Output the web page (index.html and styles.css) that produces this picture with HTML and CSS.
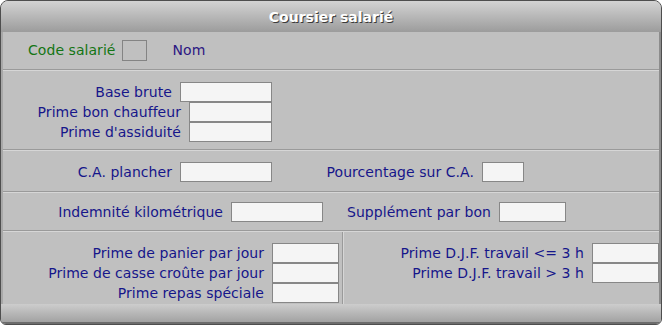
FILE: index.html
```html
<!DOCTYPE html>
<html lang="fr">
<head>
    <meta charset="UTF-8">
    <title>Coursier salarié</title>
    <link rel="stylesheet" href="styles.css">
</head>
<body>
    <div class="window">
        <div class="title-bar">Coursier salarié</div>

        <div class="window-body">
            <div class="section section-head">
                <span class="label label-code">Code salarié</span>
                <span class="code-box"></span>
                <span class="label label-nom">Nom</span>
            </div>
            <div class="separator"></div>

            <div class="section section-base">
                <div class="group group-base">
                    <div class="field"><span class="label">Base brute</span><input class="box w-92" type="text"></div>
                    <div class="field"><span class="label">Prime bon chauffeur</span><input class="box w-83" type="text"></div>
                    <div class="field"><span class="label">Prime d'assiduité</span><input class="box w-83" type="text"></div>
                </div>
            </div>
            <div class="separator"></div>

            <div class="section section-ca">
                <div class="group group-ca1">
                    <div class="field"><span class="label">C.A. plancher</span><input class="box w-92" type="text"></div>
                </div>
                <div class="group group-ca2">
                    <div class="field"><span class="label">Pourcentage sur C.A.</span><input class="box w-42" type="text"></div>
                </div>
            </div>
            <div class="separator"></div>

            <div class="section section-km">
                <div class="group group-km1">
                    <div class="field"><span class="label">Indemnité kilométrique</span><input class="box w-92" type="text"></div>
                </div>
                <div class="group group-km2">
                    <div class="field"><span class="label">Supplément par bon</span><input class="box w-67" type="text"></div>
                </div>
            </div>
            <div class="separator"></div>

            <div class="section section-primes">
                <div class="column column-left">
                    <div class="field"><span class="label">Prime de panier par jour</span><input class="box w-67" type="text"></div>
                    <div class="field"><span class="label">Prime de casse croûte par jour</span><input class="box w-67" type="text"></div>
                    <div class="field"><span class="label">Prime repas spéciale</span><input class="box w-67" type="text"></div>
                </div>
                <div class="vseparator"></div>
                <div class="column column-right">
                    <div class="field"><span class="label">Prime D.J.F. travail &lt;= 3 h</span><input class="box w-67" type="text"></div>
                    <div class="field"><span class="label">Prime D.J.F. travail &gt; 3 h</span><input class="box w-67" type="text"></div>
                </div>
            </div>
        </div>

        <div class="footer-bar"></div>
    </div>
</body>
</html>
```

FILE: styles.css
```css
body {
    margin: 0;
    background-color: #ffffff;
    font-family: 'DejaVu Sans', 'Liberation Sans', sans-serif;
}

.window {
    width: 662px;
    height: 325px;
    box-sizing: border-box;
    border: 1px solid #4e4e4e;
    border-radius: 8px 8px 6px 6px;
    background-color: #c0c0c0;
    overflow: hidden;
    display: flex;
    flex-direction: column;
}

.title-bar {
    height: 31px;
    flex-shrink: 0;
    background: linear-gradient(#d3d3d3, #9c9c9c);
    color: #ffffff;
    font-size: 14px;
    font-weight: bold;
    text-align: center;
    line-height: 33px;
    text-shadow: 1px 1px 0 #3a3a3a;
}

.window-body {
    flex: 1;
    border-left: 2px solid #a8a8a8;
    border-right: 2px solid #8c8c8c;
    display: flex;
    flex-direction: column;
}

.footer-bar {
    height: 18px;
    flex-shrink: 0;
    background: linear-gradient(#cdcdcd, #a2a2a2);
    border-bottom: 2px solid #6c6c6c;
}

.separator {
    height: 0;
    border-top: 1px solid #9a9a9a;
    border-bottom: 1px solid #d6d6d6;
}

.vseparator {
    width: 0;
    border-left: 1px solid #9a9a9a;
    border-right: 1px solid #d6d6d6;
}

.section {
    box-sizing: border-box;
    display: flex;
}

.label {
    font-size: 14px;
    letter-spacing: 0.05px;
    color: #16168a;
    white-space: nowrap;
}

.box {
    box-sizing: border-box;
    height: 20px;
    margin: 0;
    padding: 0;
    border: 1px solid #878787;
    background-color: #f5f5f5;
    outline: none;
}

.w-92 { width: 92px; }
.w-83 { width: 83px; }
.w-67 { width: 67px; }
.w-42 { width: 42px; }

.field {
    height: 20px;
    display: flex;
    align-items: center;
    justify-content: flex-end;
    gap: 8px;
}

.group {
    display: flex;
    flex-direction: column;
}

/* ligne du code salarié */
.section-head {
    height: 37px;
    padding: 8px 0 0 25px;
    align-items: flex-start;
}

.section-head .label {
    line-height: 21px;
}

.label-code {
    color: #147514;
}

.label-nom {
    color: #2c1782;
    margin-left: 26px;
}

.code-box {
    width: 25px;
    height: 21px;
    box-sizing: border-box;
    border: 1px solid #848484;
    margin-left: 6px;
}

.section-base {
    height: 78px;
    padding-top: 11px;
}

.group-base { width: 269px; }

.section-ca {
    height: 40px;
    padding-top: 11px;
}

.group-ca1 { width: 269px; }
.group-ca2 { width: 252px; }

.section-km {
    height: 37px;
    padding-top: 9px;
}

.group-km1 { width: 320px; }
.group-km2 { width: 243px; }

.section-primes {
    flex: 1;
}

.column {
    padding-top: 11px;
    display: flex;
    flex-direction: column;
}

.column-left {
    width: 336px;
    padding-right: 3px;
}

.column-right {
    flex: 1;
}
```
